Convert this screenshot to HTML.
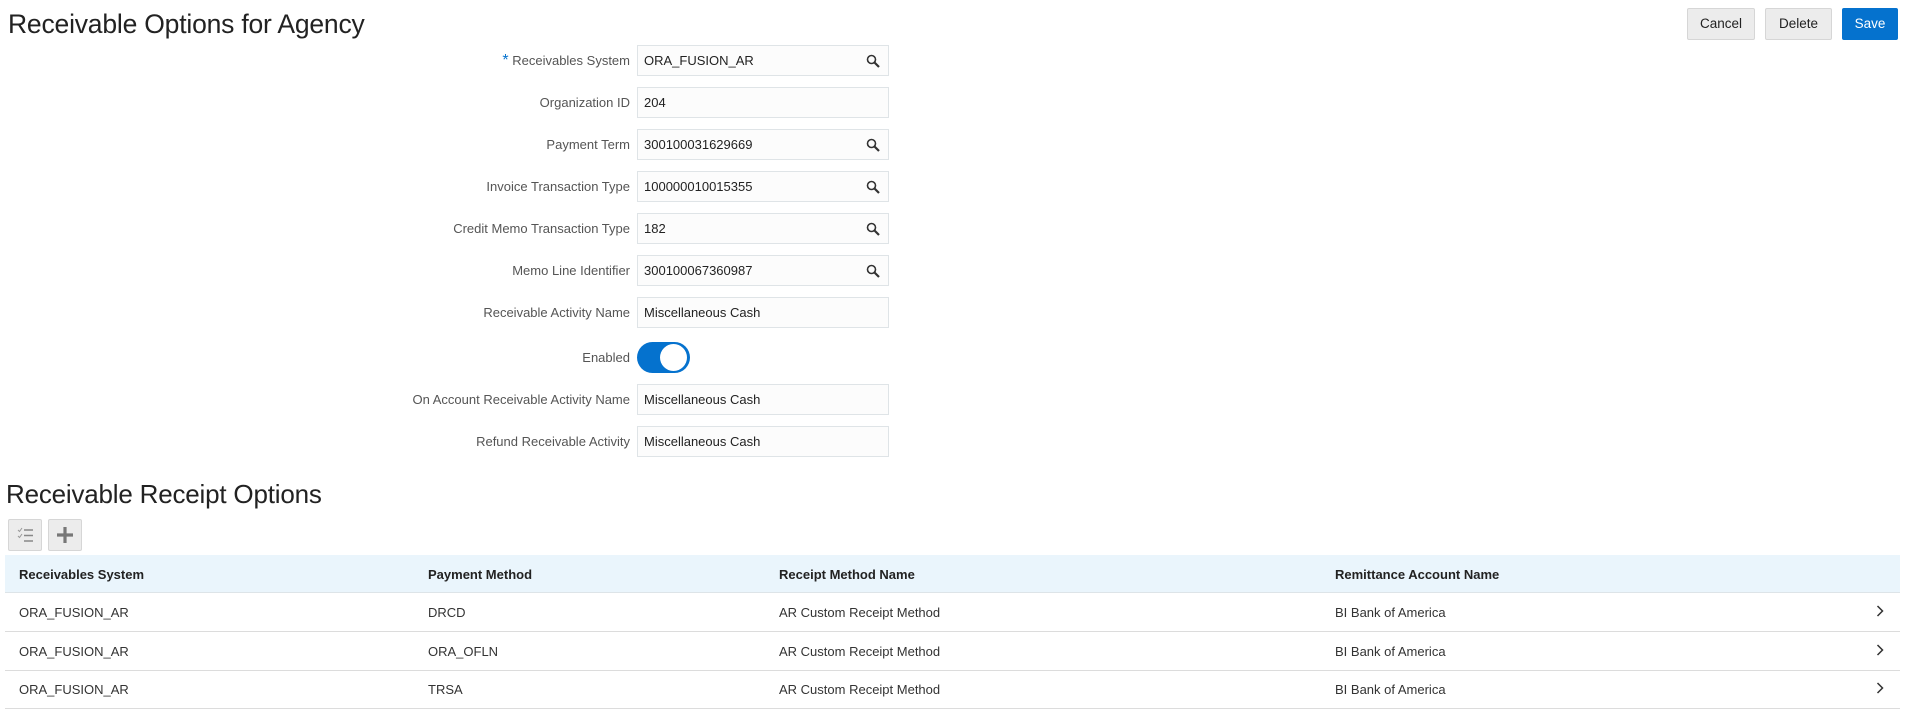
<!DOCTYPE html>
<html><head><meta charset="utf-8"><style>
*{box-sizing:border-box;margin:0;padding:0}
body{width:1906px;height:714px;background:#fff;font-family:"Liberation Sans",sans-serif;color:#333;position:relative;overflow:hidden}
.a{position:absolute}
h1{position:absolute;left:8px;top:9px;font-size:26.5px;font-weight:normal;color:#222;letter-spacing:-0.2px}
h2{position:absolute;left:6px;top:479px;font-size:26px;font-weight:normal;color:#222;letter-spacing:-0.2px}
.btn{position:absolute;top:8px;height:32px;border:1px solid #d6d6d6;border-radius:2px;background:#ececec;font-size:13.5px;color:#222;text-align:center;line-height:30px}
.lbl{position:absolute;right:1276px;font-size:13px;color:#555;text-align:right;white-space:nowrap;line-height:31px}
.in{position:absolute;left:637px;width:252px;height:31px;border:1px solid #dfe4e7;background:#fcfcfc;font-size:13px;color:#222;line-height:29px;padding-left:6px}
.in svg{position:absolute;right:8px;top:8px}
.tb{position:absolute;top:519px;width:34px;height:32px;border:1px solid #d6d6d6;border-radius:2px;background:#ececec}
.hdr{position:absolute;left:5px;top:555px;width:1895px;height:38px;background:#eaf5fc;border-bottom:1px solid #dde4e8}
.c{position:absolute;font-size:13px;white-space:nowrap}
.hd{font-weight:bold;color:#222;top:567px}
.row{position:absolute;left:5px;width:1895px;height:39px;border-bottom:1px solid #dcdcdc}
</style></head><body>
<h1>Receivable Options for Agency</h1>
<div class="btn" style="left:1687px;width:68px">Cancel</div>
<div class="btn" style="left:1765px;width:67px">Delete</div>
<div class="btn" style="left:1842px;width:56px;background:#0572ce;border-color:#0572ce;color:#fff">Save</div>

<div class="lbl" style="top:45px"><span style="color:#0572ce;font-size:16px">*</span> Receivables System</div>
<div class="in" style="top:45px">ORA_FUSION_AR<svg width="14" height="14" viewBox="0 0 14 14"><circle cx="5.5" cy="5.5" r="4" fill="none" stroke="#333" stroke-width="1.6"/><path d="M8.5 8.5L13 13" stroke="#333" stroke-width="2.2"/></svg></div>
<div class="lbl" style="top:87px">Organization ID</div>
<div class="in" style="top:87px">204</div>
<div class="lbl" style="top:129px">Payment Term</div>
<div class="in" style="top:129px">300100031629669<svg width="14" height="14" viewBox="0 0 14 14"><circle cx="5.5" cy="5.5" r="4" fill="none" stroke="#333" stroke-width="1.6"/><path d="M8.5 8.5L13 13" stroke="#333" stroke-width="2.2"/></svg></div>
<div class="lbl" style="top:171px">Invoice Transaction Type</div>
<div class="in" style="top:171px">100000010015355<svg width="14" height="14" viewBox="0 0 14 14"><circle cx="5.5" cy="5.5" r="4" fill="none" stroke="#333" stroke-width="1.6"/><path d="M8.5 8.5L13 13" stroke="#333" stroke-width="2.2"/></svg></div>
<div class="lbl" style="top:213px">Credit Memo Transaction Type</div>
<div class="in" style="top:213px">182<svg width="14" height="14" viewBox="0 0 14 14"><circle cx="5.5" cy="5.5" r="4" fill="none" stroke="#333" stroke-width="1.6"/><path d="M8.5 8.5L13 13" stroke="#333" stroke-width="2.2"/></svg></div>
<div class="lbl" style="top:255px">Memo Line Identifier</div>
<div class="in" style="top:255px">300100067360987<svg width="14" height="14" viewBox="0 0 14 14"><circle cx="5.5" cy="5.5" r="4" fill="none" stroke="#333" stroke-width="1.6"/><path d="M8.5 8.5L13 13" stroke="#333" stroke-width="2.2"/></svg></div>
<div class="lbl" style="top:297px">Receivable Activity Name</div>
<div class="in" style="top:297px">Miscellaneous Cash</div>
<div class="lbl" style="top:342px">Enabled</div>
<div class="a" style="left:637px;top:342px;width:53px;height:31px;border-radius:16px;background:#0572ce"><div class="a" style="left:23px;top:2px;width:27px;height:27px;border-radius:50%;background:#fff"></div></div>
<div class="lbl" style="top:384px">On Account Receivable Activity Name</div>
<div class="in" style="top:384px">Miscellaneous Cash</div>
<div class="lbl" style="top:426px">Refund Receivable Activity</div>
<div class="in" style="top:426px">Miscellaneous Cash</div>

<h2>Receivable Receipt Options</h2>
<div class="tb" style="left:8px"><svg width="32" height="30" viewBox="0 0 32 30"><path d="M9 10l1.5 1.5L13 8M9 16l1.5 1.5L13 14" stroke="#999" stroke-width="1" fill="none"/><path d="M15 10h9M15 15.5h9M15 21h9" stroke="#888" stroke-width="1.6"/></svg></div>
<div class="tb" style="left:48px"><svg width="32" height="30" viewBox="0 0 32 30"><path d="M16 7v16M8 15h16" stroke="#777" stroke-width="3.2"/></svg></div>

<div class="hdr"></div>
<div class="c hd" style="left:19px">Receivables System</div>
<div class="c hd" style="left:428px">Payment Method</div>
<div class="c hd" style="left:779px">Receipt Method Name</div>
<div class="c hd" style="left:1335px">Remittance Account Name</div>

<div class="row" style="top:593px"></div>
<div class="row" style="top:632px"></div>
<div class="row" style="top:670px"></div>

<div class="c" style="left:19px;top:605px">ORA_FUSION_AR</div><div class="c" style="left:428px;top:605px">DRCD</div><div class="c" style="left:779px;top:605px">AR Custom Receipt Method</div><div class="c" style="left:1335px;top:605px">BI Bank of America</div>
<div class="c" style="left:19px;top:644px">ORA_FUSION_AR</div><div class="c" style="left:428px;top:644px">ORA_OFLN</div><div class="c" style="left:779px;top:644px">AR Custom Receipt Method</div><div class="c" style="left:1335px;top:644px">BI Bank of America</div>
<div class="c" style="left:19px;top:682px">ORA_FUSION_AR</div><div class="c" style="left:428px;top:682px">TRSA</div><div class="c" style="left:779px;top:682px">AR Custom Receipt Method</div><div class="c" style="left:1335px;top:682px">BI Bank of America</div>

<svg class="a" style="left:1876px;top:605px" width="8" height="12" viewBox="0 0 8 12"><path d="M1.5 1l5 5-5 5" stroke="#333" stroke-width="1.5" fill="none"/></svg>
<svg class="a" style="left:1876px;top:644px" width="8" height="12" viewBox="0 0 8 12"><path d="M1.5 1l5 5-5 5" stroke="#333" stroke-width="1.5" fill="none"/></svg>
<svg class="a" style="left:1876px;top:682px" width="8" height="12" viewBox="0 0 8 12"><path d="M1.5 1l5 5-5 5" stroke="#333" stroke-width="1.5" fill="none"/></svg>
</body></html>
